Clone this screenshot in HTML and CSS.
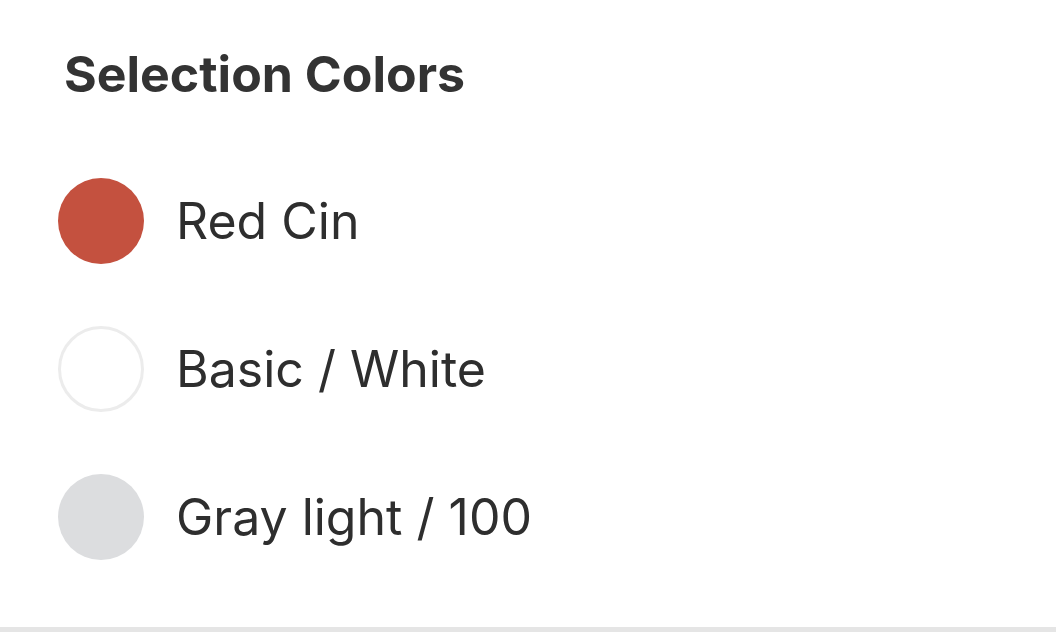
FILE: index.html
```html
<!DOCTYPE html>
<html lang="en">
<head>
<meta charset="utf-8">
<title>Selection Colors</title>
<link rel="stylesheet" href="styles.css">
</head>
<body>
<section class="panel">
  <h2 class="panel-title">Selection Colors</h2>
  <ul class="color-list">
    <li class="color-item"><span class="swatch swatch-red"></span><span class="color-name">Red Cin</span></li>
    <li class="color-item"><span class="swatch swatch-white"></span><span class="color-name">Basic / White</span></li>
    <li class="color-item"><span class="swatch swatch-gray"></span><span class="color-name">Gray light / 100</span></li>
  </ul>
</section>
</body>
</html>
```

FILE: styles.css
```css
* { box-sizing: border-box; }
html, body { margin: 0; padding: 0; background: #ffffff; }
body { font-family: Inter, "Noto Sans", "Liberation Sans", sans-serif; color: #2e2e2e; }
.panel {
  height: 632px;
  padding: 44px 0 0 58px;
  border-bottom: 5px solid #e5e5e5;
  overflow: hidden;
}
.panel-title {
  margin: 0 0 74px 6px;
  font-size: 50px;
  line-height: 60px;
  font-weight: 700;
  color: #333333;
}
.color-list {
  list-style: none;
  margin: 0;
  padding: 0;
  display: flex;
  flex-direction: column;
  gap: 62px;
}
.color-item {
  display: flex;
  align-items: center;
  gap: 32px;
  height: 86px;
}
.swatch {
  width: 86px;
  height: 86px;
  border-radius: 50%;
  flex: none;
}
.swatch-red { background: #c4513f; }
.swatch-white { background: #ffffff; border: 3px solid #ececec; }
.swatch-gray { background: #dcdddf; }
.color-name {
  font-size: 50px;
  font-weight: 400;
  color: #2e2e2e;
}
```
